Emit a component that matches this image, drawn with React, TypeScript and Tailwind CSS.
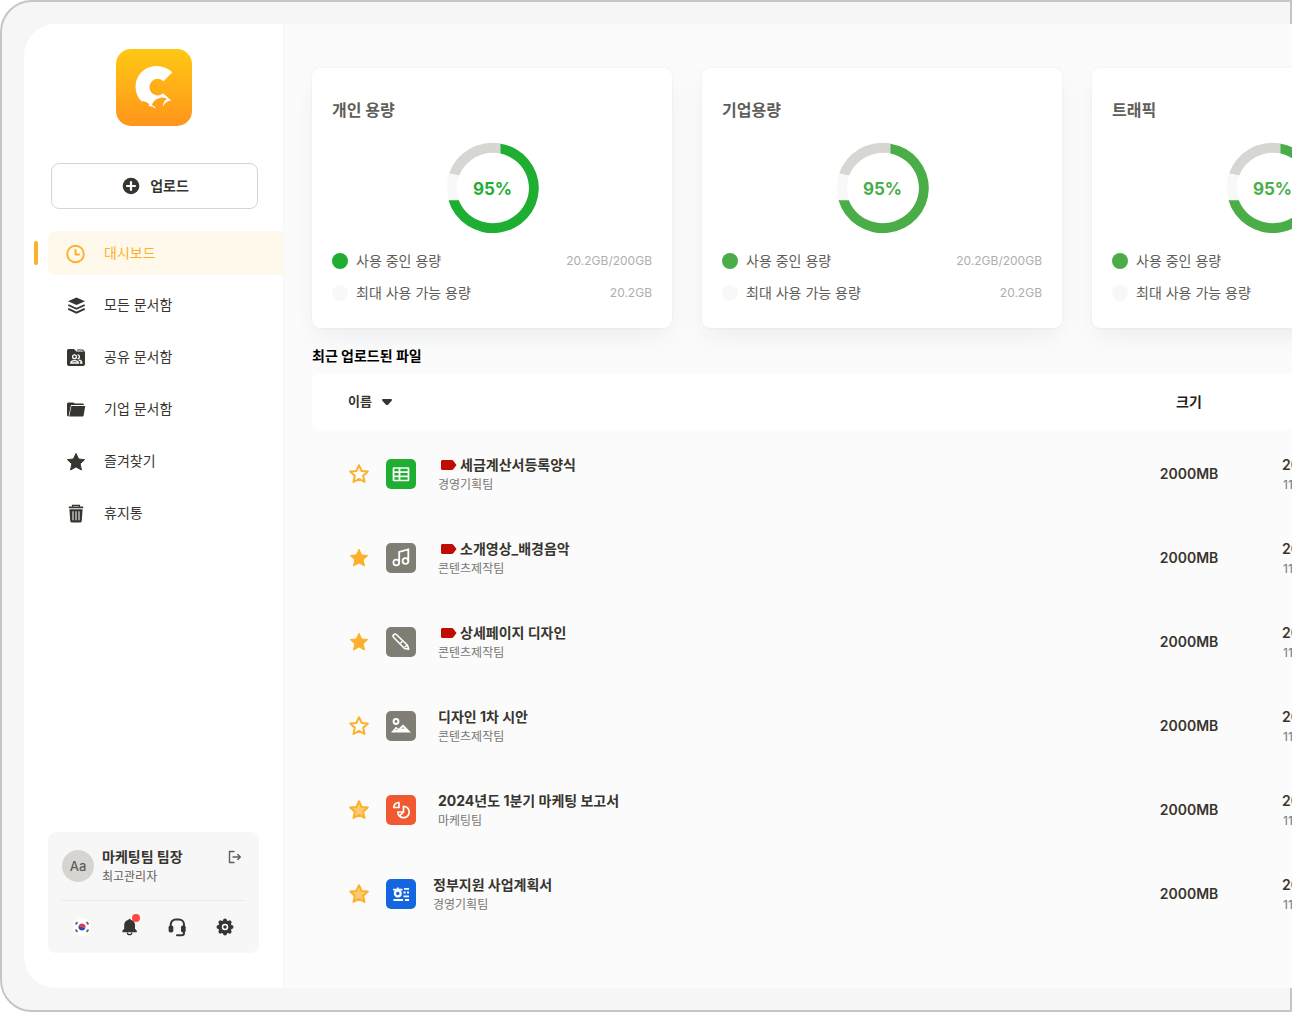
import type { ReactNode } from "react";

const DARK = "#37352f";

function Logo() {
  return (
    <svg viewBox="0 0 76 77" className="h-[77px] w-[76px]" role="img" aria-label="Logo">
      <defs>
        <linearGradient id="logo-bg" x1="0" y1="0" x2="0" y2="1">
          <stop offset="0" stopColor="#ffc814" />
          <stop offset="1" stopColor="#ff951b" />
        </linearGradient>
      </defs>
      <rect width="76" height="77" rx="15" fill="url(#logo-bg)" />
      <path
        fill="#fff"
        d="M56.300 23.200 47.500 32.200A8.300 8.300 0 1 0 46.300 45L47.300 44.500 55.200 51.500Q48.700 52.500 46.800 57.800 47 52.500 51 49.800 48 48.200 44.500 48.700 37.500 50 36 56.300 39 57.300 40.300 59.700 37 57.300 32.300 56.700L33.500 55.800Q30.500 51.500 25.500 52.300C21.500 48.500 19.600 43.500 19.600 38 19.600 26 29 17 40.500 17 46.500 17 52 19.300 56.300 23.200Z"
      />
    </svg>
  );
}

function StarIcon({ variant }: { variant: "outline" | "solid" | "soft" }) {
  const d =
    "M11 2.200l2.600 5.700 6.200.7-4.600 4.200 1.300 6.200L11 15.900 5.500 19l1.300-6.200-4.600-4.200 6.200-.7L11 2.200z";
  return (
    <svg viewBox="0 0 22 22" className="h-[22px] w-[22px]" aria-hidden="true">
      <path
        d={d}
        fill={variant === "outline" ? "none" : variant === "solid" ? "#fcb02b" : "#fbcb74"}
        stroke="#fcb02b"
        strokeWidth={variant === "solid" ? 1 : 2}
        strokeLinejoin="round"
      />
    </svg>
  );
}

const navIcons: Record<string, ReactNode> = {
  clock: (
    <g fill="none" stroke="#fcb02b" strokeWidth="1.900" strokeLinecap="round" strokeLinejoin="round">
      <circle cx="9.500" cy="10" r="8.300" />
      <path d="M9.500 6v4.500H13" />
    </g>
  ),
  layers: (
    <g>
      <path fill={DARK} d="M10.500 1.500 19 5.300 10.500 9 2 5.300z" />
      <g fill="none" stroke={DARK} strokeWidth="1.900">
        <path d="m2.300 9 8.200 3.800L18.700 9M2.300 12.800l8.200 3.800 8.200-3.800" />
      </g>
    </g>
  ),
  shared: (
    <g>
      <path fill={DARK} d="M2.500 1H8l2.500 2.500H19V16a2 2 0 0 1-2 2H3a2 2 0 0 1-2-2V2.500A1.500 1.500 0 0 1 2.500 1Z" />
      <path d="M11 2h5.800L18 3.500" fill="none" stroke={DARK} strokeWidth="1.200" />
      <g fill="none" stroke="#fff" strokeWidth="1.300">
        <circle cx="8.500" cy="8.700" r="1.900" />
        <path d="M11.500 6.800a1.900 1.900 0 0 1 0 3.800" />
        <path d="M4.800 15c0-3.300 7.500-3.300 7.500 0zM12.800 12.200c1.800.2 3 1.200 3 2.800h-2" />
      </g>
    </g>
  ),
  folder: (
    <g fill={DARK}>
      <path d="M1 4C1 3.200 1.700 2.500 2.500 2.500h4.700l1.800 1h7.500c.8 0 1.500.5 1.500 1.500H5L3 14l-.4 2.500C1.500 16.300 1 15.700 1 15z" />
      <path d="M5.400 6H19.200L17.700 15.200c-.1.800-.8 1.300-1.600 1.300H3.200z" />
    </g>
  ),
  star: (
    <path
      fill={DARK}
      stroke={DARK}
      strokeWidth="1"
      strokeLinejoin="round"
      d="m10 1.500 2.600 5.500 6 .7-4.500 4.100 1.300 6.200-5.400-3.100L4.600 18l1.300-6.200L1.400 7.700l6-.7z"
    />
  ),
  trash: (
    <g>
      <path d="M6.500 3V1.300h7V3" fill="none" stroke={DARK} strokeWidth="1.200" />
      <path fill={DARK} d="M2.800 2.500h14.400v1.700H2.800zM3.400 5.300h13.200l-.9 12c-.1.700-.6 1.200-1.300 1.200H5.600c-.7 0-1.200-.5-1.300-1.200z" />
      <path d="M7 7.300v9M10 7.300v9M13 7.300v9" stroke="#fff" strokeWidth="1" />
    </g>
  ),
};

const nav = [
  { label: "대시보드", icon: "clock", active: true },
  { label: "모든 문서함", icon: "layers" },
  { label: "공유 문서함", icon: "shared" },
  { label: "기업 문서함", icon: "folder" },
  { label: "즐겨찾기", icon: "star" },
  { label: "휴지통", icon: "trash" },
];

function NavItem({ label, icon, active }: { label: string; icon: string; active?: boolean }) {
  return (
    <a
      href="#"
      aria-current={active ? "page" : undefined}
      className={
        active
          ? "relative flex h-11 items-center gap-[18px] rounded-l-lg bg-[#fff9eb] pl-[18px] pt-0.5 text-[#fcb02b]"
          : "flex h-11 items-center gap-[18px] pl-[18px] pt-0.5 text-[#37352f]"
      }
    >
      {active && <span className="absolute -left-[14px] top-[10px] h-6 w-1 rounded-sm bg-[#fcb02b]" />}
      <svg viewBox="0 0 20 20" className="h-5 w-5" aria-hidden="true">
        {navIcons[icon]}
      </svg>
      <span className="pb-0.5 text-sm">{label}</span>
    </a>
  );
}

function FooterIcons() {
  return (
    <div className="flex items-center justify-between px-[10px] pt-4">
      <button type="button" aria-label="언어" className="flex h-5 w-5 items-center justify-center rounded-full bg-white">
        <svg viewBox="0 0 20 20" className="h-5 w-5" aria-hidden="true">
          <circle cx="10" cy="10" r="9.500" fill="#fff" stroke="#efefef" strokeWidth="0.600" />
          <g transform="rotate(20 10 10)">
            <path d="M6.500 10a3.500 3.500 0 0 1 7 0z" fill="#f0343f" />
            <path d="M6.500 10a3.500 3.500 0 0 0 7 0z" fill="#2c48b8" />
          </g>
          <g stroke="#66676f" strokeWidth="1.900">
            <path d="m3.600 7.500 1.800-2.500M14.600 5l1.800 2.500M3.600 12.500l1.800 2.500M14.600 15l1.800-2.500" />
          </g>
        </svg>
      </button>
      <button type="button" aria-label="알림" className="relative h-5 w-5">
        <svg viewBox="0 0 20 20" className="h-5 w-5" aria-hidden="true">
          <path
            fill={DARK}
            d="M9.600 1.800c.6 0 1 .4 1 .9 2.700.5 4.400 2.500 4.400 5.100v3.900l1.800 2v1.500H2.400v-1.500l1.800-2V7.800c0-2.600 1.700-4.600 4.400-5.100 0-.5.400-.9 1-.9Z"
          />
          <path d="M7.400 15.500a2.200 2.200 0 0 0 4.400 0" fill="none" stroke={DARK} strokeWidth="1.300" />
        </svg>
        <span className="absolute -top-[3px] left-3 h-2 w-2 rounded-full bg-[#ff4842]" />
      </button>
      <button type="button" aria-label="고객센터" className="h-5 w-5">
        <svg viewBox="0 0 20 20" className="h-5 w-5" aria-hidden="true">
          <path
            d="M3.700 10V7.500a5 5 0 0 1 5-5h3.300a5 5 0 0 1 5 5V16c0 1.600-.9 2.300-2.500 2.300H10"
            fill="none"
            stroke={DARK}
            strokeWidth="2"
            strokeLinecap="round"
          />
          <rect x="1.600" y="8.500" width="4.700" height="7" rx="1.800" fill={DARK} />
          <rect x="14" y="8.500" width="4.700" height="7" rx="1.800" fill={DARK} />
        </svg>
      </button>
      <button type="button" aria-label="설정" className="h-5 w-5">
        <svg viewBox="0 0 20 20" className="h-5 w-5" aria-hidden="true">
          <circle cx="10" cy="10" r="6.700" fill={DARK} />
          <g stroke={DARK} strokeWidth="4" strokeLinecap="round">
            <path d="M10 3.500v13M3.500 10h13M5.400 5.400l9.200 9.200M14.600 5.400l-9.200 9.200" />
          </g>
          <circle cx="10" cy="10" r="2.500" fill={DARK} stroke="#fff" strokeWidth="1.500" />
        </svg>
      </button>
    </div>
  );
}

function Sidebar() {
  return (
    <aside className="flex w-[260px] shrink-0 flex-col border-r border-[#f7f7f7] bg-white pb-[35px] pt-[25px]">
      <div className="flex justify-center">
        <Logo />
      </div>
      <div className="mb-[22px] ml-[27px] mr-[25px] mt-[37px]">
        <button
          type="button"
          className="flex h-[46px] w-full items-center justify-center gap-[10px] rounded-lg border border-[#d6d5d2] bg-white pl-0.5 text-sm font-bold text-[#37352f]"
        >
          <svg viewBox="0 0 18 18" className="h-[18px] w-[18px]" aria-hidden="true">
            <circle cx="9" cy="9" r="8.300" fill={DARK} />
            <path d="M9 5v8M5 9h8" stroke="#fff" strokeWidth="2.200" strokeLinecap="round" />
          </svg>
          업로드
        </button>
      </div>
      <nav className="flex flex-col gap-2 pl-6">
        {nav.map((n) => (
          <NavItem key={n.label} {...n} />
        ))}
      </nav>
      <section className="ml-6 mr-6 mt-auto h-[121px] rounded-lg bg-[#f7f7f7] px-[14px] pt-[14px]">
        <div className="flex h-[55px] items-start gap-2 border-b border-[#e9e9e8]">
          <span className="mt-1 flex h-8 w-8 items-center justify-center rounded-full bg-[#d6d5d2] pt-0.5 text-[13px] font-medium text-[#5f5e59]">
            Aa
          </span>
          <div className="flex flex-col pt-px">
            <span className="text-sm font-bold leading-5 text-[#37352f]">마케팅팀 팀장</span>
            <span className="text-xs leading-5 text-[#5f5e59]">최고관리자</span>
          </div>
          <button type="button" aria-label="로그아웃" className="ml-auto mr-[3px] mt-1">
            <svg viewBox="0 0 14 14" className="h-[14px] w-[14px]" fill="none" stroke="#5f5e59" strokeWidth="1.400" aria-hidden="true">
              <path d="M6 1.500H1.500v11H6M5 7h7M9.800 4.500 12.300 7 9.800 9.500" strokeLinecap="round" strokeLinejoin="round" />
            </svg>
          </button>
        </div>
        <FooterIcons />
      </section>
    </aside>
  );
}

function Donut({ color }: { color: string }) {
  return (
    <svg viewBox="0 0 94 92" className="h-[92px] w-[94px]" aria-hidden="true">
      <g transform="translate(47 46)">
        <path fill="#d7d6d3" d="M-44-14.500A46 45 0 0 1 8-44.500V-34.500A36.200 35.200 0 0 0-33.800-12.500z" />
        <path fill="#f8f8f6" d="M-44-14.500A46 45 0 0 0-44 13H-33.500A36.200 35.200 0 0 1-33.800-12.500z" />
        <path fill={color} d="M7.500-44.300A46 45 0 1 1-44.500 12.200H-34.200A36.200 35.200 0 1 0 7.500-34.400z" />
      </g>
    </svg>
  );
}

function UsageCard({ title, color }: { title: string; color: string }) {
  return (
    <article className="flex w-[360px] shrink-0 flex-col rounded-lg bg-white px-5 pb-[19px] pt-[30px] shadow-[0_0_2px_rgba(145,158,171,0.2),0_12px_24px_-4px_rgba(145,158,171,0.14)]">
      <h2 className="text-base font-bold text-[#5f5e59]">{title}</h2>
      <div className="mt-5 grid place-items-center pl-px">
        <div className="col-start-1 row-start-1">
          <Donut color={color} />
        </div>
        <strong className="col-start-1 row-start-1 pt-1 text-[17px] font-bold" style={{ color }}>
          95%
        </strong>
      </div>
      <dl className="mt-[11px]">
        <div className="flex h-8 items-center gap-2">
          <span className="h-4 w-4 rounded-full" style={{ backgroundColor: color }} />
          <dt className="text-sm text-[#5f5e59]">사용 중인 용량</dt>
          <dd className="ml-auto text-xs text-[#afaeac]">20.2GB/200GB</dd>
        </div>
        <div className="flex h-8 items-center gap-2">
          <span className="h-4 w-4 rounded-full bg-[#f8f8f6]" />
          <dt className="text-sm text-[#5f5e59]">최대 사용 가능 용량</dt>
          <dd className="ml-auto text-xs text-[#afaeac]">20.2GB</dd>
        </div>
      </dl>
    </article>
  );
}

const glyphs: Record<string, ReactNode> = {
  sheet: (
    <g fill="none" stroke="#fff" strokeWidth="1.700">
      <rect x="7.500" y="9" width="15" height="12.500" rx="0.500" />
      <path d="M7.500 13.200h15M7.500 17.300h15M13.500 9v12.500" />
    </g>
  ),
  music: (
    <g fill="none" stroke="#fff" strokeWidth="1.800">
      <circle cx="10.300" cy="19.500" r="2.900" />
      <circle cx="19.500" cy="18" r="2.900" />
      <path d="M13.200 19.500V9L22.300 6.500V18" />
    </g>
  ),
  pen: (
    <g fill="none" stroke="#fff" strokeWidth="1.600" strokeLinejoin="round">
      <path d="M7.800 7.600c.9-.9 2-.7 2.800.1L21.500 18.300l1.200 4-4.200-.8L7.700 10.500c-.8-.8-.8-2 .1-2.900Z" />
      <path d="m14.500 16.200 1.800-1.800M18.800 20.300l2.200-2.200" />
    </g>
  ),
  image: (
    <g>
      <circle cx="10" cy="10.500" r="2.400" fill="none" stroke="#fff" strokeWidth="2" />
      <path fill="#fff" d="M5 21.500 9.300 16.500c.4-.5 1-.5 1.500-.1l1.700 1.300 3.700-3.500c.5-.5 1.200-.5 1.700 0L25 21.500z" />
      <path d="m9.500 19 1-1 1 1M15.500 18l1.500-1.500 1 1.500" fill="none" stroke="#807d75" strokeWidth="0.700" />
    </g>
  ),
  chart: (
    <g fill="none" stroke="#fff" strokeWidth="1.700" strokeLinejoin="round">
      <path d="M13 7.500V12.500H7.800c0-2.800 2.200-4.800 5.200-5Z" />
      <path d="M17.500 11.300a5.700 5.700 0 1 1-5.700 5.700h5.700zM17.500 17l-3.500 3.500" />
    </g>
  ),
  doc: (
    <g fill="none" stroke="#fff" strokeWidth="1.800">
      <circle cx="11.800" cy="14.500" r="2.900" strokeWidth="2.200" />
      <path d="M7 10.600h9.500M11.800 8.500v2M18 9.900h5M17.500 13.500h2.200M21 13.500h2M17.500 17.300h5.500M7.500 21h9.500M19 21h4" />
    </g>
  ),
};

type FileRow = {
  name: string;
  team: string;
  star: "outline" | "solid" | "soft";
  glyph: string;
  tile: string;
  tagged?: boolean;
  tight?: boolean;
};

const files: FileRow[] = [
  { name: "세금계산서등록양식", team: "경영기획팀", star: "outline", glyph: "sheet", tile: "#1eaf32", tagged: true },
  { name: "소개영상_배경음악", team: "콘텐츠제작팀", star: "solid", glyph: "music", tile: "#807d75", tagged: true },
  { name: "상세페이지 디자인", team: "콘텐츠제작팀", star: "solid", glyph: "pen", tile: "#807d75", tagged: true },
  { name: "디자인 1차 시안", team: "콘텐츠제작팀", star: "outline", glyph: "image", tile: "#807d75" },
  { name: "2024년도 1분기 마케팅 보고서", team: "마케팅팀", star: "soft", glyph: "chart", tile: "#f15a30" },
  { name: "정부지원 사업계획서", team: "경영기획팀", star: "soft", glyph: "doc", tile: "#1466e0", tight: true },
];

function FileTable() {
  return (
    <table className="mt-2 w-[1140px] table-fixed border-collapse">
      <colgroup>
        <col className="w-[812px]" />
        <col className="w-[130px]" />
        <col />
      </colgroup>
      <thead>
        <tr className="h-14 text-[#37352f]">
          <th className="rounded-l-lg bg-white pl-9 text-left">
            <button type="button" className="flex items-center gap-[10px] text-[13px] font-bold">
              이름
              <svg viewBox="0 0 10 6" className="h-[6px] w-[10px]" aria-hidden="true">
                <path d="M.5 0h9c.5.500.5 1.200.2 1.700L6.500 5.300a2 2 0 0 1-3 0L.3 1.700C0 1.200 0 .5.500 0Z" fill={DARK} />
              </svg>
            </button>
          </th>
          <th className="bg-white text-sm font-bold text-[#1f1e1a]">크기</th>
          <th className="rounded-r-lg bg-white" />
        </tr>
      </thead>
      <tbody>
        {files.map((f) => (
          <tr key={f.name} className="h-[84px]">
            <td className="pl-9">
              <div className="flex items-center pt-1">
                <button type="button" aria-label="즐겨찾기">
                  <StarIcon variant={f.star} />
                </button>
                <svg viewBox="0 0 30 30" className="ml-4 h-[30px] w-[30px]" aria-hidden="true">
                  <rect width="30" height="30" rx="5" fill={f.tile} />
                  {glyphs[f.glyph]}
                </svg>
                <div className={f.tight ? "ml-[17px] pt-0.5" : "ml-[22px] pt-0.5"}>
                  <div className="flex h-5 items-center text-sm font-bold text-[#37352f]">
                    {f.tagged && (
                      <svg viewBox="0 0 16 10" className="mx-[3px] h-[10px] w-4" aria-hidden="true">
                        <path d="M1.500 0h9.300c.7 0 1.300.3 1.700.9L15.500 5l-3 4.100c-.4.600-1 .9-1.700.9H1.500C.7 10 0 9.300 0 8.500v-7C0 .7.7 0 1.500 0Z" fill="#c00d04" />
                      </svg>
                    )}
                    {f.name}
                  </div>
                  <div className="text-xs leading-5 text-[#787774]">{f.team}</div>
                </div>
              </div>
            </td>
            <td className="pt-1 text-center text-sm font-semibold text-[#37352f]">2000MB</td>
            <td className="pl-7 pt-1.5">
              <div className="text-sm font-semibold leading-5 text-[#37352f]">2024.03.21</div>
              <div className="pl-px text-xs leading-5 text-[#787774]">11:30</div>
            </td>
          </tr>
        ))}
      </tbody>
    </table>
  );
}

export default function App() {
  return (
    <div className="min-h-screen overflow-hidden bg-white font-[Inter,'Noto_Sans_CJK_KR',sans-serif]" lang="ko">
      <div className="flex min-h-screen rounded-l-[32px] border-2 border-[#c6c6c6] bg-[#f6f6f6] py-[22px] pl-[22px]">
        <div className="-mr-[2px] flex min-w-0 flex-1 overflow-hidden rounded-l-[32px] bg-[#fbfbfb]">
          <Sidebar />
          <main className="min-w-0 flex-1 overflow-hidden pl-7 pt-11">
            <div className="flex gap-[30px]">
              <UsageCard title="개인 용량" color="#1eaf32" />
              <UsageCard title="기업용량" color="#4aad48" />
              <UsageCard title="트래픽" color="#4aad48" />
            </div>
            <h2 className="mt-[18px] text-sm font-bold leading-5 text-black">최근 업로드된 파일</h2>
            <FileTable />
          </main>
        </div>
      </div>
    </div>
  );
}
